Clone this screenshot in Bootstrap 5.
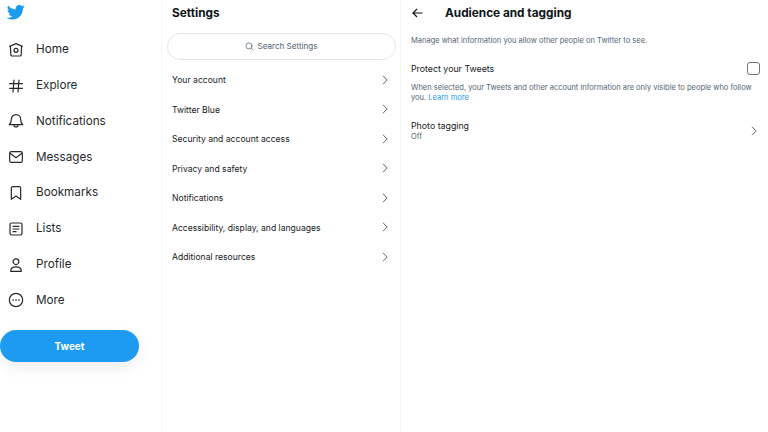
<!DOCTYPE html>
<html lang="en">
<head>
  <meta charset="UTF-8" />
  <title>Audience and tagging / Twitter</title>
  <link href="https://cdn.jsdelivr.net/npm/bootstrap@5.3.0/dist/css/bootstrap.min.css" rel="stylesheet">
  <style>
    html, body { height: 100%; }
    body {
      font-family: "Inter", "Liberation Sans", sans-serif;
      color: #0f1419;
      background: #fff;
      overflow: hidden;
    }
    .app-shell { width: 768px; height: 432px; }
    .side-col { width: 162px; border-right: 1px solid #f4f6f7; }
    .mid-col { width: 239px; border-right: 1px solid #eff3f4; }
    .main-col { width: 367px; }

    .bird { width: 18px; height: 18px; margin: 3px 0 0 7px; display: block; }
    .side-nav { margin-top: 11px; }
    .side-link {
      height: 35.8px;
      padding-left: 8px;
      gap: 12px;
      font-size: 11.7px;
      color: #26292c;
      text-decoration: none;
    }
    .side-link svg { width: 16px; height: 16px; flex: none; }
    .tweet-btn {
      width: 139px;
      height: 32px;
      margin-top: 12px;
      border-radius: 16px;
      background: #1d9bf0;
      border: 0;
      color: #fff;
      font-size: 10px;
      font-weight: 700;
      padding: 0;
      box-shadow: 0 6px 14px rgba(0, 0, 0, .07);
    }

    .mid-title { font-size: 11.8px; font-weight: 700; line-height: 16px; padding: 5px 0 0 10px; }
    .search-pill {
      height: 27px;
      margin: 12px 4px 0 5px;
      border: 1px solid #dfe5e8;
      border-radius: 14px;
      font-size: 8.1px;
      color: #536471;
      gap: 3px;
    }
    .search-pill svg { width: 9px; height: 9px; }
    .set-list { margin-top: 5px; }
    .set-row {
      height: 29.5px;
      padding: 0 11.500px 0 10px;
      font-size: 8.6px;
      color: #16191c;
      text-decoration: none;
    }
    .set-row span { padding-top: 2px; }
    .chev { width: 8px; height: 10px; flex: none; }

    .main-head { height: 25px; padding: 0 0 0 11px; gap: 22px; }
    .main-head svg { width: 11px; height: 10px; }
    .main-title { font-size: 11.8px; font-weight: 700; line-height: 16px; }
    .hint { font-size: 7.5px; line-height: 10px; color: #536471; }
    .main-intro { padding: 11px 10px 0 10px; }
    .protect-row { padding: 13px 8px 0 10px; font-size: 8.8px; height: 32px; color: #16191c; }
    .box-check { width: 13px; height: 13px; border: 1.4px solid #66757f; border-radius: 3px; }
    .protect-note { padding: 5px 8px 0 10px; }
    .learn { color: #1d9bf0; text-decoration: none; }
    .photo-row { padding: 17px 10px 0 10px; color: #16191c; text-decoration: none; }
    .photo-name { font-size: 8.8px; line-height: 11px; }
    .photo-val { font-size: 7.5px; line-height: 10px; margin-top: 1px; color: #536471; }
  </style>
</head>
<body>
  <div class="app-shell d-flex">
    <div class="side-col">
      <svg class="bird" viewBox="0 0 24 24"><path fill="#1d9bf0" d="M23.6 4.8c-.9.4-1.8.7-2.8.8 1-.6 1.8-1.6 2.2-2.7-1 .6-2 1-3.1 1.2C19 3.1 17.7 2.5 16.300 2.500c-2.700 0-4.900 2.200-4.900 4.900 0 .4 0 .8.100 1.100C7.400 8.300 3.800 6.300 1.400 3.300c-.4.700-.7 1.600-.7 2.500 0 1.700.9 3.200 2.200 4.100-.8 0-1.600-.2-2.200-.6v.1c0 2.400 1.700 4.400 3.900 4.800-.4.100-.8.200-1.300.2-.3 0-.6 0-.9-.1.600 2 2.400 3.400 4.600 3.400-1.700 1.300-3.800 2.100-6.100 2.100-.4 0-.8 0-1.200-.1 2.200 1.400 4.800 2.200 7.500 2.200 9.100 0 14-7.500 14-14v-.6c1-.7 1.800-1.600 2.600-2.500z"/></svg>
      <nav class="side-nav d-flex flex-column">
        <a class="side-link d-flex align-items-center" href="#">
          <svg viewBox="0 0 24 24" fill="none" stroke="#26292c" stroke-width="1.8" stroke-linejoin="round"><path d="M12 2.500 21.500 6.500 20.300 8 19.800 19a2 2 0 0 1-2 2H6.200a2 2 0 0 1-2-2L3.700 8 2.500 6.500z"/><circle cx="12" cy="12.500" r="3"/></svg>
          <span>Home</span>
        </a>
        <a class="side-link d-flex align-items-center" href="#">
          <svg viewBox="0 0 24 24" fill="none" stroke="#26292c" stroke-width="1.8" stroke-linecap="round"><path d="M9 3 7.500 21M16.500 3 15 21M2.500 8.500h19M2.500 15.500h19"/></svg>
          <span>Explore</span>
        </a>
        <a class="side-link d-flex align-items-center" href="#">
          <svg viewBox="0 0 24 24" fill="none" stroke="#26292c" stroke-width="1.8" stroke-linejoin="round"><path d="M12 2.500c-4 0-7 3-7 7.200 0 3.300-1 5.800-3 7.800h20c-2-2-3-4.500-3-7.800 0-4.200-3-7.200-7-7.200z"/><path d="M9 18a3 3 0 0 0 6 0"/></svg>
          <span>Notifications</span>
        </a>
        <a class="side-link d-flex align-items-center" href="#">
          <svg viewBox="0 0 24 24" fill="none" stroke="#26292c" stroke-width="1.8" stroke-linejoin="round"><rect x="2.500" y="4" width="19" height="16" rx="2.500"/><path d="M3 6.500 12 13l9-6.500"/></svg>
          <span>Messages</span>
        </a>
        <a class="side-link d-flex align-items-center" href="#">
          <svg viewBox="0 0 24 24" fill="none" stroke="#26292c" stroke-width="1.8" stroke-linejoin="round"><path d="M5 4.500A2 2 0 0 1 7 2.500h10a2 2 0 0 1 2 2V21.500l-7-5-7 5z"/></svg>
          <span>Bookmarks</span>
        </a>
        <a class="side-link d-flex align-items-center" href="#">
          <svg viewBox="0 0 24 24" fill="none" stroke="#26292c" stroke-width="1.8" stroke-linecap="round"><rect x="3" y="3" width="18" height="18" rx="2.500"/><path d="M7.500 8h9M7.500 12h9M7.500 16h4.500"/></svg>
          <span>Lists</span>
        </a>
        <a class="side-link d-flex align-items-center" href="#">
          <svg viewBox="0 0 24 24" fill="none" stroke="#26292c" stroke-width="1.8"><circle cx="12" cy="7" r="4.300"/><path d="M4 21.500c0-4.200 3-6.700 8-6.700s8 2.500 8 6.700z" stroke-linejoin="round"/></svg>
          <span>Profile</span>
        </a>
        <a class="side-link d-flex align-items-center" href="#">
          <svg viewBox="0 0 24 24" fill="none" stroke="#26292c" stroke-width="1.8"><circle cx="12" cy="12" r="10"/><g fill="#26292c" stroke="none"><circle cx="7.500" cy="12" r="1.300"/><circle cx="12" cy="12" r="1.300"/><circle cx="16.500" cy="12" r="1.300"/></g></svg>
          <span>More</span>
        </a>
      </nav>
      <button class="btn tweet-btn d-block" type="button">Tweet</button>
    </div>

    <div class="mid-col">
      <div class="mid-title">Settings</div>
      <div class="search-pill d-flex align-items-center justify-content-center">
        <svg viewBox="0 0 24 24" fill="none" stroke="#536471" stroke-width="2" stroke-linecap="round"><circle cx="10.500" cy="10.500" r="8"/><path d="m16.500 16.500 5.500 5.500"/></svg>
        <span>Search Settings</span>
      </div>
      <div class="set-list">
        <a class="set-row d-flex align-items-center justify-content-between" href="#"><span>Your account</span><svg class="chev" viewBox="0 0 8 10" fill="none" stroke="#536471" stroke-width="1"><path d="m2 .8 4.200 4.200L2 9.200"/></svg></a>
        <a class="set-row d-flex align-items-center justify-content-between" href="#"><span>Twitter Blue</span><svg class="chev" viewBox="0 0 8 10" fill="none" stroke="#536471" stroke-width="1"><path d="m2 .8 4.200 4.200L2 9.200"/></svg></a>
        <a class="set-row d-flex align-items-center justify-content-between" href="#"><span>Security and account access</span><svg class="chev" viewBox="0 0 8 10" fill="none" stroke="#536471" stroke-width="1"><path d="m2 .8 4.200 4.200L2 9.200"/></svg></a>
        <a class="set-row d-flex align-items-center justify-content-between" href="#"><span>Privacy and safety</span><svg class="chev" viewBox="0 0 8 10" fill="none" stroke="#536471" stroke-width="1"><path d="m2 .8 4.200 4.200L2 9.200"/></svg></a>
        <a class="set-row d-flex align-items-center justify-content-between" href="#"><span>Notifications</span><svg class="chev" viewBox="0 0 8 10" fill="none" stroke="#536471" stroke-width="1"><path d="m2 .8 4.200 4.200L2 9.200"/></svg></a>
        <a class="set-row d-flex align-items-center justify-content-between" href="#"><span>Accessibility, display, and languages</span><svg class="chev" viewBox="0 0 8 10" fill="none" stroke="#536471" stroke-width="1"><path d="m2 .8 4.200 4.200L2 9.200"/></svg></a>
        <a class="set-row d-flex align-items-center justify-content-between" href="#"><span>Additional resources</span><svg class="chev" viewBox="0 0 8 10" fill="none" stroke="#536471" stroke-width="1"><path d="m2 .8 4.200 4.200L2 9.200"/></svg></a>
      </div>
    </div>

    <div class="main-col">
      <div class="main-head d-flex align-items-center">
        <svg viewBox="0 0 11 10" fill="none" stroke="#0f1419" stroke-width="1.200"><path d="M10.500 5H1M5 1 1 5l4 4"/></svg>
        <div class="main-title">Audience and tagging</div>
      </div>
      <div class="main-intro hint">Manage what information you allow other people on Twitter to see.</div>
      <div class="protect-row d-flex align-items-center justify-content-between">
        <span>Protect your Tweets</span>
        <span class="box-check"></span>
      </div>
      <div class="protect-note hint">
        <span class="d-block">When selected, your Tweets and other account information are only visible to people who follow</span>
        <span class="d-block">you. <a class="learn" href="#">Learn more</a></span>
      </div>
      <a class="photo-row d-flex align-items-center justify-content-between" href="#">
        <span>
          <span class="photo-name d-block">Photo tagging</span>
          <span class="photo-val d-block">Off</span>
        </span>
        <svg class="chev" viewBox="0 0 8 10" fill="none" stroke="#536471" stroke-width="1"><path d="m2 .8 4.200 4.200L2 9.200"/></svg>
      </a>
    </div>
  </div>
  <script src="https://cdn.jsdelivr.net/npm/bootstrap@5.3.0/dist/js/bootstrap.bundle.min.js"></script>
</body>
</html>
